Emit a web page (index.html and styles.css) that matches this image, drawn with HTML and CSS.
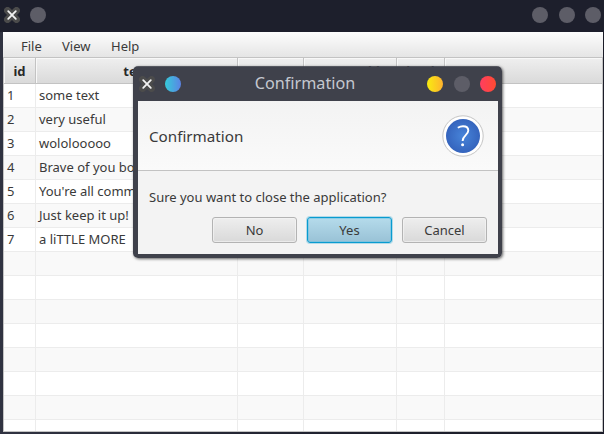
FILE: index.html
```html
<!DOCTYPE html>
<html lang="en">
<head>
<meta charset="utf-8">
<title>Table</title>
<link rel="stylesheet" href="styles.css">
</head>
<body>
<div class="window">
  <header class="titlebar">
    <svg class="pin" viewBox="0 0 16 16"><path class="halo" d="M3.5 3.5l9 9M12.5 3.5l-9 9"/><path class="cross" d="M4.2 4.2l7.6 7.6M11.8 4.2l-7.6 7.6"/></svg>
    <i class="dot gap-left"></i>
    <span class="spacer"></span>
    <span class="controls"><i class="dot"></i><i class="dot"></i><i class="dot"></i></span>
  </header>
  <main class="content">
    <nav class="menubar"><span class="file">File</span><span class="view">View</span><span class="help">Help</span></nav>
    <div class="table">
      <div class="row head"><b>id</b><b>text</b><b>numInt</b><b>numDouble</b><b>bool</b><b></b></div>
      <div class="row"><span>1</span><span>some text</span><span></span><span></span><span></span><span></span></div>
      <div class="row"><span>2</span><span>very useful</span><span></span><span></span><span></span><span></span></div>
      <div class="row"><span>3</span><span>wololooooo</span><span></span><span></span><span></span><span></span></div>
      <div class="row"><span>4</span><span>Brave of you bo</span><span></span><span></span><span></span><span></span></div>
      <div class="row"><span>5</span><span>You're all comm</span><span></span><span></span><span></span><span></span></div>
      <div class="row"><span>6</span><span>Just keep it up!</span><span></span><span></span><span></span><span></span></div>
      <div class="row"><span>7</span><span>a liTTLE MORE</span><span></span><span></span><span></span><span></span></div>
      <div class="row"><span></span><span></span><span></span><span></span><span></span><span></span></div>
      <div class="row"><span></span><span></span><span></span><span></span><span></span><span></span></div>
      <div class="row"><span></span><span></span><span></span><span></span><span></span><span></span></div>
      <div class="row"><span></span><span></span><span></span><span></span><span></span><span></span></div>
      <div class="row"><span></span><span></span><span></span><span></span><span></span><span></span></div>
      <div class="row"><span></span><span></span><span></span><span></span><span></span><span></span></div>
      <div class="row"><span></span><span></span><span></span><span></span><span></span><span></span></div>
      <div class="row"><span></span><span></span><span></span><span></span><span></span><span></span></div>
    </div>
  </main>
</div>
<section class="dialog">
  <header class="dialog-title">
    <svg class="pin" viewBox="0 0 16 16"><path class="halo" d="M3.5 3.5l9 9M12.5 3.5l-9 9"/><path class="cross" d="M4.2 4.2l7.6 7.6M11.8 4.2l-7.6 7.6"/></svg>
    <i class="dot blue gap-left"></i>
    <h1>Confirmation</h1>
    <span class="controls"><i class="dot yellow"></i><i class="dot"></i><i class="dot red"></i></span>
  </header>
  <div class="dialog-body">
    <div class="banner">
      <h2>Confirmation</h2>
      <svg class="question" viewBox="0 0 42 42">
        <defs><radialGradient id="q"><stop offset="0" stop-color="#4784d9"/><stop offset="1" stop-color="#3564bd"/></radialGradient></defs>
        <circle cx="21" cy="21" r="20.2" fill="#fff" stroke="#c5c5c5"/>
        <circle cx="21" cy="21" r="17" fill="url(#q)"/>
        <path d="M15.8 12.8Q18.3 11.2 21 11.2Q26.3 11.2 26.3 15.6C26.3 20 20.6 20.4 20.6 26" fill="none" stroke="#fff" stroke-width="1.9"/>
        <circle cx="20.6" cy="29.7" r="1.5" fill="#fff"/>
      </svg>
    </div>
    <p>Sure you want to close the application?</p>
    <div class="buttons"><button>No</button><button class="default">Yes</button><button>Cancel</button></div>
  </div>
</section>
</body>
</html>
```
FILE: styles.css
```css
* { box-sizing: border-box; }
body { margin: 0; width: 604px; height: 434px; overflow: hidden; background: #1d1e2b; color: #3a3a3a; font: 13px/18px "Noto Sans", "Open Sans", sans-serif; }
.window { height: 434px; padding: 0 1px 2px 3px; background: linear-gradient(90deg, #303341, #1e202d 60%, #1b1c28); }
.titlebar { display: flex; align-items: center; height: 32px; margin: 0 -1px 0 -3px; padding: 0 3px 2px 4px; background: #1d1f2c; }
.pin { width: 16px; height: 16px; flex: none; fill: none; stroke-linecap: round; }
.halo { stroke: #4b4b4b; stroke-width: 7; }
.cross { stroke: #f2f2f2; stroke-width: 1.8; }
.dot { display: block; width: 16px; height: 16px; border-radius: 50%; background: #5d5d67; }
.gap-left { margin-left: 10px; }
.spacer { flex: 1; }
.controls { display: flex; gap: 10.5px; }
.content { height: 400px; overflow: hidden; background: #fff; }
.menubar { display: flex; height: 25px; padding: 5px 0 0 18px; background: linear-gradient(#fdfdfd, #e5e5e5); }
.file { width: 41px; }
.view { width: 49px; }
.table { height: 375px; overflow: hidden; border: 1px solid #c3c3c3; }
.row { display: grid; grid-template-columns: 32px 202px 66px 93px 48px 1fr; height: 24px; }
.row > * { border-right: 1px solid #ececec; border-bottom: 1px solid #ececec; padding: 2px 0 0 3px; white-space: nowrap; overflow: hidden; }
.row > :last-child { border-right: 0; }
.row:nth-child(odd) { background: #f9f9f9; }
.row.head { height: 26px; background: linear-gradient(#efefef, #d9d9d9); }
.head > b { padding: 4px 0 0; border-color: #c3c3c3; box-shadow: inset 1px 1px #f8f8f8; text-align: center; color: #292929; }
.dialog { position: absolute; left: 133px; top: 66px; width: 369px; height: 192px; padding: 0 4px 4px 5px; border-radius: 5px; background: linear-gradient(#3f414bdd 1px, #3f414b 1px); box-shadow: 1px 1px 3px #0009; }
.dialog-title { display: flex; align-items: center; height: 35px; padding: 0 2px 0 1px; }
.dialog-title h1 { flex: 1; margin: 0 0 1px 2px; text-align: center; font-size: 16.2px; line-height: 22px; font-weight: 400; color: #c5c8d0; }
.blue { background: linear-gradient(90deg, #35cbd9, #5c83e5); }
.yellow { background: linear-gradient(90deg, #f8ec10, #ffb22e); }
.red { background: linear-gradient(90deg, #ff3e60, #ff4b31); }
.dialog-body { height: 153px; background: #f3f3f3; }
.banner { display: flex; justify-content: space-between; align-items: center; height: 70px; padding: 0 14px 0 11px; border-bottom: 1px solid #c2c2c2; background: linear-gradient(#f3f3f3, #fafafa); }
.banner h2 { margin: 0; font-size: 15.2px; font-weight: 400; }
.question { width: 42px; height: 42px; }
.dialog-body p { margin: 17px 0 0 11px; }
.buttons { display: flex; justify-content: flex-end; gap: 10px; margin-top: 11px; padding-right: 11px; }
button { width: 85px; height: 26px; padding: 0; border: 1px solid #b3b3b3; border-radius: 3px; background: linear-gradient(#eee, #d9d9d9); box-shadow: inset 0 0 0 1px #f5f5f5aa; color: inherit; font: inherit; }
.default { border-color: #089bd0; background: linear-gradient(#b5dbeb, #99c2d6); box-shadow: 0 0 0 1px #0096c944, inset 0 0 0 1px #5fc0e577; }
```
